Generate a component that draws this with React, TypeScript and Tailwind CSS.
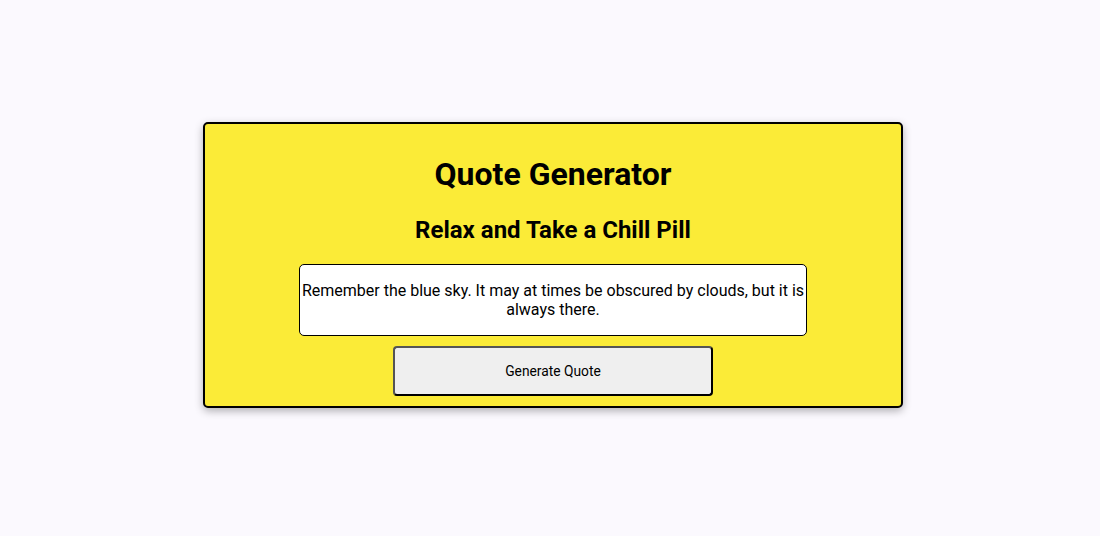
import React, { useState } from "react";

const quotes = [
  "Remember the blue sky. It may at times be obscured by clouds, but it is always there.",
];

const App = () => {
  const [quote, setQuote] = useState(quotes[0]);

  return (
    <div className="min-h-[536px] w-full bg-[#fbf9fe] flex items-start justify-center pt-[122px] pl-[6px] font-['Roboto',sans-serif] text-black">
      <div className="w-[700px] h-[286px] bg-[#fbeb37] border-2 border-black rounded-[5px] shadow-[0_3px_8px_rgba(0,0,0,0.3)] flex flex-col items-center pt-[32px]">
        <h1 className="text-[32px] leading-[36px] font-bold">Quote Generator</h1>
        <h2 className="mt-[24px] text-[24px] leading-[28px] font-bold">Relax and Take a Chill Pill</h2>
        <div className="mt-[20px] w-[508px] h-[72px] bg-white border border-black rounded-[5px] flex items-center justify-center text-center text-[16px] leading-[19px]">
          {quote}
        </div>
        <button
          onClick={() => setQuote(quotes[Math.floor(Math.random() * quotes.length)])}
          className="mt-[10px] w-[320px] h-[50px] bg-[#efefef] border-2 border-t-[#555] border-l-[#555] border-b-black border-r-black rounded-[4px] text-[13.8px] font-['Roboto',sans-serif]"
        >
          Generate Quote
        </button>
      </div>
    </div>
  );
};

export default App;
